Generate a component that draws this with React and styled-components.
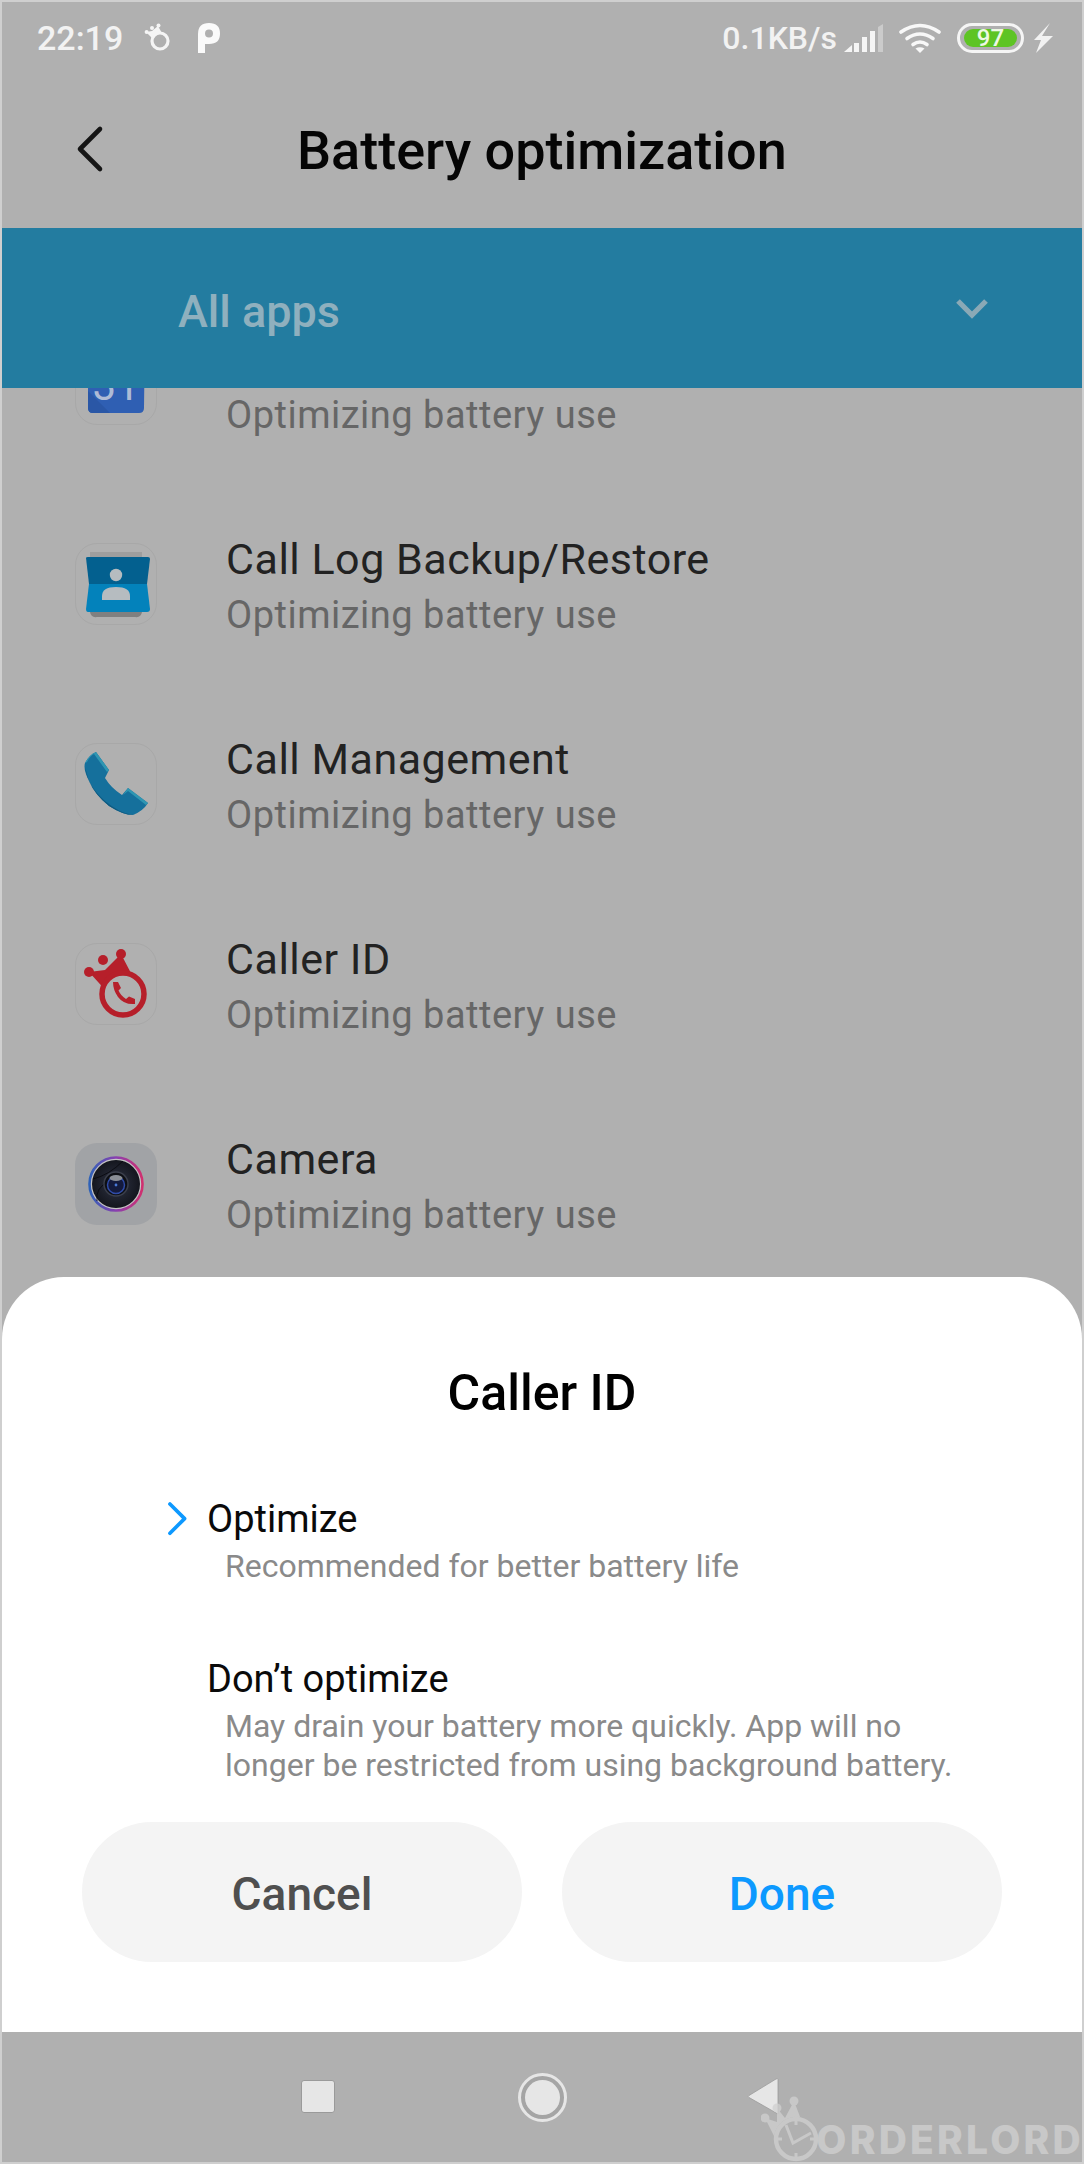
import React from 'react';
import styled, { createGlobalStyle } from 'styled-components';

const GlobalStyle = createGlobalStyle`
  html, body {
    margin: 0;
    padding: 0;
    background: #cfcfcf;
  }
  * {
    box-sizing: border-box;
  }
`;

const apps = [
  { name: 'Calendar', icon: <CalendarIcon /> },
  { name: 'Call Log Backup/Restore', icon: <BackupIcon /> },
  { name: 'Call Management', icon: <PhoneIcon /> },
  { name: 'Caller ID', icon: <CallerIcon /> },
  { name: 'Camera', icon: <CameraIcon />, filled: true },
];

function CalendarIcon() {
  return (
    <svg width="82" height="82" viewBox="0 0 82 82">
      <path d="M13 -10H70L69 65Q69 70 64 70H18Q13 70 13 65Z" fill="#2f5fb3" />
      <path d="M13 48L35 70H18Q13 70 13 65Z" fill="#2a57a6" />
      <text x="41" y="57" textAnchor="middle" fontFamily="Roboto, sans-serif" fontSize="42" fill="#aebbd6">31</text>
    </svg>
  );
}

function BackupIcon() {
  return (
    <svg width="82" height="82" viewBox="0 0 82 82">
      <path d="M15 9H67V20H15Z" fill="#9e9e9e" />
      <path d="M15 60H67V69Q66 75 60 74H22Q16 75 15 69Z" fill="#808080" />
      <path d="M11 15Q11 14 13 14H73Q75 14 75 16L72 41H14Z" fill="#03608f" />
      <path d="M14 41H72L75 66Q75 69 72 69H13Q11 69 11 66Z" fill="#0382bb" />
      <circle cx="41" cy="32" r="6.2" fill="#b6bcc0" />
      <path d="M27 57V53Q27 44 41 44Q55 44 55 53V57Z" fill="#b6bcc0" />
    </svg>
  );
}

function PhoneIcon() {
  return (
    <svg width="82" height="82" viewBox="0 0 82 82">
      <path
        d="M21 9Q14 12 10 20Q8 26 14 38Q20 52 34 63Q48 72 58 72Q68 68 73 60L53 45L47 52Q36 45 30 35L34 27Z"
        fill="#15709c"
      />
      <path d="M21 9L34 27L32 29L19 11Q15 13 12 19L10 20Q14 12 21 9Z" fill="#2f96b2" />
      <path d="M53 45L73 60L71 62L53 48L48 52Z" fill="#2f96b2" />
      <path d="M10 24Q12 42 30 58Q44 70 58 72Q48 72 34 63Q20 52 14 38Z" fill="#0f5a80" />
    </svg>
  );
}

function CallerIcon() {
  return (
    <svg width="82" height="82" viewBox="0 0 82 82">
      <path d="M14 29L30 27L46 11L58 34L33 50Z" fill="#b61f2a" />
      <circle cx="14" cy="29" r="5" fill="#b61f2a" />
      <circle cx="28" cy="17" r="5" fill="#b61f2a" />
      <circle cx="46" cy="11" r="5" fill="#b61f2a" />
      <circle cx="48" cy="51" r="21" fill="#b0b0b0" stroke="#b61f2a" strokeWidth="5.5" />
      <path
        d="M38 39H43L46 45L43.5 47.5Q46 53 51 56L54 53.5L60 56V61Q49 62 43 54Q38 47 38 39Z"
        fill="#b61f2a"
      />
    </svg>
  );
}

function CameraIcon() {
  return (
    <svg width="82" height="82" viewBox="0 0 82 82">
      <defs>
        <linearGradient id="camRing" x1="0" y1="0" x2="1" y2="0">
          <stop offset="0" stopColor="#2f62b8" />
          <stop offset="0.5" stopColor="#8a3fb0" />
          <stop offset="1" stopColor="#d0306f" />
        </linearGradient>
        <radialGradient id="camBody">
          <stop offset="0" stopColor="#2f3445" />
          <stop offset="1" stopColor="#14161e" />
        </radialGradient>
      </defs>
      <circle cx="41" cy="41" r="26.5" fill="#c4c4c4" stroke="url(#camRing)" strokeWidth="2.6" />
      <circle cx="41" cy="41" r="24" fill="url(#camBody)" />
      <path d="M18 36Q34 32 48 18M22 58Q20 45 34 38" fill="none" stroke="#07080c" strokeWidth="0.8" />
      <circle cx="41" cy="41" r="12" fill="#0d0f15" stroke="#3b3f4c" strokeWidth="1.5" />
      <circle cx="41" cy="42" r="8.5" fill="#141a3d" stroke="#2f4ba8" strokeWidth="1.5" />
      <ellipse cx="41" cy="35" rx="6.5" ry="3" fill="#8a8e96" />
      <circle cx="41" cy="42" r="1.4" fill="#4878d8" />
    </svg>
  );
}

function RingCrown() {
  return (
    <svg width="26" height="30" viewBox="0 0 26 30">
      <path d="M2 9L8 8L14 3L19 12L12 19Z" fill="#f5f5f5" />
      <circle cx="2.6" cy="9" r="2" fill="#f5f5f5" />
      <circle cx="8" cy="5" r="2" fill="#f5f5f5" />
      <circle cx="14.5" cy="2.4" r="2" fill="#f5f5f5" />
      <circle cx="16" cy="18" r="8" fill="#b0b0b0" stroke="#f5f5f5" strokeWidth="3.2" />
    </svg>
  );
}

function ParkingMark() {
  return (
    <svg width="22" height="30" viewBox="0 0 22 30">
      <path
        d="M0 11Q0 0 11 0Q22 0 22 10.5Q22 21 11 21H7V30H0ZM11 6.5Q7 6.5 7 10.5Q7 14.5 11 14.5Q15 14.5 15 10.5Q15 6.5 11 6.5Z"
        fill="#fafafa"
        fillRule="evenodd"
      />
    </svg>
  );
}

function SignalIcon() {
  return (
    <svg width="40" height="28" viewBox="0 0 40 28">
      <path d="M1 28L9 21V28Z" fill="#f5f5f5" />
      <rect x="11" y="19" width="5" height="9" fill="#f5f5f5" />
      <rect x="19" y="13" width="5" height="15" fill="#f5f5f5" />
      <rect x="27" y="7" width="5" height="21" fill="#f5f5f5" />
      <path d="M35 3L40 0V28H35Z" fill="#cbcbcb" />
    </svg>
  );
}

function WifiIcon() {
  return (
    <svg width="42" height="30" viewBox="0 0 42 30" fill="none" stroke="#f8f8f8" strokeWidth="3.6" strokeLinecap="round">
      <path d="M2 9Q21 -4 40 9" />
      <path d="M8 15.5Q21 6.5 34 15.5" />
      <path d="M14 21.5Q21 16.5 28 21.5" />
      <path d="M21 30L16.5 25.5Q21 23 25.5 25.5Z" fill="#f8f8f8" stroke="none" />
    </svg>
  );
}

function BoltIcon() {
  return (
    <svg width="19" height="30" viewBox="0 0 19 30">
      <path d="M16 0L8 13H19L2 30L7 17H0Z" fill="#f2f2f2" />
    </svg>
  );
}

function Chevron({ dir, color, size, width }) {
  const paths = {
    left: 'M26 4L6 24L26 44',
    right: 'M4 4L24 24L4 44',
  };
  return (
    <svg width={size} height={size * 1.6} viewBox="0 0 30 48" fill="none" stroke={color} strokeWidth={width} strokeLinecap="round" strokeLinejoin="round">
      <path d={paths[dir]} />
    </svg>
  );
}

function WatermarkLogo() {
  return (
    <svg width="60" height="66" viewBox="0 0 60 66" fill="none" stroke="#d0d0d0">
      <path d="M4 22L16 26L16 12L24 22L33 5L41 26L20 36L14 42Z" fill="#d0d0d0" stroke="none" />
      <circle cx="4" cy="22" r="4.5" fill="#d0d0d0" stroke="none" />
      <circle cx="16" cy="12" r="4.5" fill="#d0d0d0" stroke="none" />
      <circle cx="33" cy="5" r="4.5" fill="#d0d0d0" stroke="none" />
      <circle cx="35" cy="43" r="22" fill="#b0b0b0" stroke="none" />
      <circle cx="35" cy="43" r="20" strokeWidth="4.5" />
      <path d="M25 29L32 47L50 37" strokeWidth="3" />
      <path d="M35 24V29M35 57V62M16 43H21M49 43H54" strokeWidth="3" />
    </svg>
  );
}

export default function App() {
  return (
    <>
      <GlobalStyle />
      <Screen>
        <StatusBar>
          <StatusGroup>
            <StatusText>22:19</StatusText>
            <RingCrown />
            <ParkingSlot>
              <ParkingMark />
            </ParkingSlot>
          </StatusGroup>
          <StatusGroup $gap={6}>
            <StatusText $size={32}>0.1KB/s</StatusText>
            <SignalIcon />
            <WifiSlot>
              <WifiIcon />
            </WifiSlot>
            <Battery>
              <BatteryFill>97</BatteryFill>
            </Battery>
            <BoltSlot>
              <BoltIcon />
            </BoltSlot>
          </StatusGroup>
        </StatusBar>

        <Header>
          <BackSlot>
            <Chevron dir="left" color="#151515" size={30} width={4.6} />
          </BackSlot>
          <Title>Battery optimization</Title>
        </Header>

        <FilterBar>
          <FilterLabel>All apps</FilterLabel>
          <FilterCaret width="32" height="20" viewBox="0 0 32 20" fill="none" stroke="#8aa9b6" strokeWidth="5.2">
            <path d="M2 2L16 16L30 2" />
          </FilterCaret>
        </FilterBar>

        <AppList>
          {apps.map((app) => (
            <AppRow key={app.name}>
              <AppIcon $filled={app.filled}>{app.icon}</AppIcon>
              <AppText>
                <AppName>{app.name}</AppName>
                <AppStatus>Optimizing battery use</AppStatus>
              </AppText>
            </AppRow>
          ))}
        </AppList>

        <Sheet>
          <SheetTitle>Caller ID</SheetTitle>
          <Options>
            <Option>
              <OptionMark>
                <Chevron dir="right" color="#0d99ff" size={22} width={5} />
              </OptionMark>
              <OptionBody>
                <OptionName>Optimize</OptionName>
                <OptionHint>Recommended for better battery life</OptionHint>
              </OptionBody>
            </Option>
            <Option>
              <OptionMark />
              <OptionBody>
                <OptionName>Don’t optimize</OptionName>
                <OptionHint>
                  May drain your battery more quickly. App will no
                  <br />
                  longer be restricted from using background battery.
                </OptionHint>
              </OptionBody>
            </Option>
          </Options>
          <Buttons>
            <SheetButton $color="#4f4f4f">Cancel</SheetButton>
            <SheetButton $color="#0d99ff">Done</SheetButton>
          </Buttons>
        </Sheet>

        <NavBar>
          <NavSquare />
          <NavHome>
            <NavDot />
          </NavHome>
          <NavBack width="33" height="38" viewBox="0 0 33 38">
            <path d="M31 1.5V36L2 19.5Q0.5 18.5 2 17.5L29 1Q31 0 31 1.5Z" fill="#e6e6e6" stroke="#9a9a9a" strokeWidth="0.8" />
          </NavBack>
          <Watermark>
            <WatermarkLogo />
            <WatermarkText>ORDERLORD</WatermarkText>
          </Watermark>
        </NavBar>
      </Screen>
    </>
  );
}

const Screen = styled.div`
  position: relative;
  width: 1084px;
  height: 2164px;
  border: 2px solid #cfcfcf;
  background: #b0b0b0;
  display: flex;
  flex-direction: column;
  overflow: hidden;
  font-family: Roboto, 'Liberation Sans', sans-serif;
`;

const StatusBar = styled.div`
  height: 68px;
  padding: 3px 29px 0 35px;
  display: flex;
  align-items: center;
  justify-content: space-between;
  flex: none;
`;

const StatusGroup = styled.div`
  display: flex;
  align-items: center;
  gap: ${(p) => p.$gap || 21}px;
`;

const StatusText = styled.span`
  font-size: ${(p) => p.$size || 34}px;
  font-weight: 500;
  color: #f2f2f2;
`;

const ParkingSlot = styled.div`
  display: flex;
  margin-left: 7px;
`;

const WifiSlot = styled.div`
  display: flex;
  margin: 0 10px;
`;

const BoltSlot = styled.div`
  display: flex;
  margin-left: 4px;
`;

const Battery = styled.div`
  width: 67px;
  height: 30px;
  border: 3px solid #f5f5f5;
  border-radius: 15px;
  padding: 3px 4px;
  display: flex;
`;

const BatteryFill = styled.div`
  flex: 1;
  background: #5ec424;
  border-radius: 9px;
  color: #eef8e4;
  font-size: 24px;
  font-weight: 500;
  line-height: 18px;
  text-align: center;
`;

const Header = styled.div`
  height: 158px;
  padding-left: 72px;
  display: flex;
  align-items: center;
  flex: none;
`;

const BackSlot = styled.div`
  width: 223px;
  display: flex;
`;

const Title = styled.h1`
  margin: 2px 0 0;
  font-size: 54px;
  font-weight: 500;
  color: #050505;
`;

const FilterBar = styled.div`
  height: 160px;
  padding: 0 94px 0 176px;
  background: #237ca0;
  display: flex;
  align-items: center;
  justify-content: space-between;
  flex: none;
  position: relative;
  z-index: 1;
`;

const FilterLabel = styled.span`
  margin-top: 6px;
  font-size: 45px;
  font-weight: 500;
  color: #8fb0be;
`;

const FilterCaret = styled.svg`
  margin-top: 2px;
`;

const AppList = styled.div`
  flex: 1;
  min-height: 0;
  margin-top: -104px;
  display: flex;
  flex-direction: column;
`;

const AppRow = styled.div`
  height: 200px;
  flex: none;
  padding-left: 73px;
  display: flex;
  align-items: center;
  gap: 69px;
`;

const AppIcon = styled.div`
  width: 82px;
  height: 82px;
  border-radius: 22px;
  overflow: hidden;
  flex: none;
  border: 1px solid ${(p) => (p.$filled ? 'transparent' : '#a8a8a8')};
  background: ${(p) => (p.$filled ? '#a1a3a6' : 'transparent')};
  svg {
    display: block;
    margin: -1px;
  }
`;

const AppText = styled.div`
  padding-top: 6px;
`;

const AppName = styled.div`
  font-size: 43px;
  line-height: 56px;
  color: #222;
  letter-spacing: 0.5px;
`;

const AppStatus = styled.div`
  font-size: 38px;
  line-height: 56px;
  color: #666;
  letter-spacing: 0.5px;
`;

const Sheet = styled.div`
  height: 755px;
  flex: none;
  position: relative;
  background: #fff;
  border-radius: 62px 62px 0 0;
  display: flex;
  flex-direction: column;
`;

const SheetTitle = styled.h2`
  margin: 88px 0 0;
  font-size: 50px;
  line-height: 56px;
  font-weight: 500;
  color: #000;
  text-align: center;
`;

const Options = styled.div`
  margin-top: 76px;
  padding-left: 165px;
  display: flex;
  flex-direction: column;
  gap: 71px;
`;

const Option = styled.div`
  display: flex;
`;

const OptionMark = styled.div`
  width: 40px;
  height: 44px;
  flex: none;
  display: flex;
  align-items: center;
`;

const OptionBody = styled.div`
  display: flex;
  flex-direction: column;
`;

const OptionName = styled.div`
  font-size: 38px;
  line-height: 44px;
  color: #0a0a0a;
`;

const OptionHint = styled.div`
  margin-left: 18px;
  margin-top: 6px;
  font-size: 32px;
  line-height: 39px;
  color: #8a8a8a;
`;

const Buttons = styled.div`
  margin-top: 37px;
  padding: 0 80px;
  display: flex;
  gap: 40px;
`;

const SheetButton = styled.button`
  flex: 1;
  height: 140px;
  padding: 4px 0 0;
  border: 0;
  border-radius: 70px;
  background: #f4f4f4;
  font-family: inherit;
  font-size: 46px;
  font-weight: 500;
  color: ${(p) => p.$color};
`;

const NavBar = styled.div`
  position: relative;
  height: 130px;
  flex: none;
  padding: 0 0 0 299px;
  display: flex;
  align-items: center;
  gap: 183px;
  background: #b0b0b0;
`;

const NavSquare = styled.div`
  width: 34px;
  height: 33px;
  margin-top: -1px;
  border-radius: 3px;
  background: #e6e6e6;
  border: 1px solid #9a9a9a;
`;

const NavHome = styled.div`
  width: 49px;
  height: 49px;
  border-radius: 50%;
  border: 3px solid #e6e6e6;
  padding: 4px;
  background: #a5a5a5;
  display: flex;
`;

const NavDot = styled.div`
  flex: 1;
  border-radius: 50%;
  background: #e6e6e6;
`;

const NavBack = styled.svg`
  margin-left: -3px;
`;

const Watermark = styled.div`
  position: absolute;
  right: 0;
  bottom: 0;
  display: flex;
  align-items: flex-end;
  gap: 0;
  opacity: 0.75;
`;

const WatermarkText = styled.span`
  margin: 0 -2px 8px -5px;
  font-family: Inter, Lato, sans-serif;
  font-size: 39px;
  line-height: 28px;
  font-weight: 800;
  color: #d0d0d0;
  letter-spacing: 3.2px;
`;
